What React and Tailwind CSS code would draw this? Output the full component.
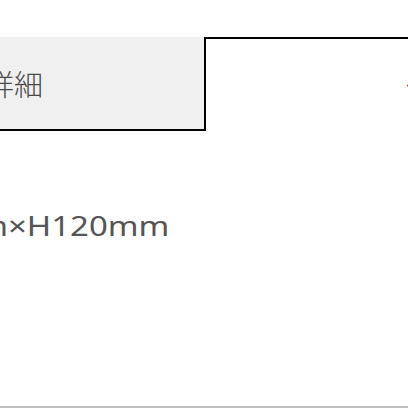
export default function App() {
  return (
    <div
      className="w-[408px] h-[408px] overflow-hidden bg-white flex flex-col"
      style={{ fontFamily: '"Noto Sans CJK JP", "Noto Sans", sans-serif' }}
    >
      {/* tabs */}
      <div className="mt-[37px] flex h-[94px]">
        <div className="w-[206px] shrink-0 bg-[#f0f0f0] border-r-2 border-b-2 border-black flex items-center">
          <div className="w-[43px] flex justify-end whitespace-nowrap text-[29px] leading-none font-light text-[#4a4a4a]">
            商品詳細
          </div>
        </div>
        <div className="flex-1 border-t-2 border-black flex items-center">
          <span className="ml-[200px] whitespace-nowrap text-[29px] leading-none font-light text-[#4a4a4a]">
            仕様
          </span>
        </div>
      </div>

      {/* spec */}
      <div
        className="mt-[81px] flex items-center text-[27px] leading-none text-[#555] whitespace-nowrap"
        style={{ fontFamily: '"Noto Sans", sans-serif' }}
      >
        <div className="w-[8px] shrink-0 flex justify-end">
          <span className="inline-block scale-x-[1.22] origin-right">W180mm</span>
        </div>
        <span className="inline-block scale-x-[1.22] origin-left">×H120mm</span>
      </div>

      <div className="flex-1" />
      <div className="h-[2px] bg-[#bdbdbd]" />
    </div>
  );
}
